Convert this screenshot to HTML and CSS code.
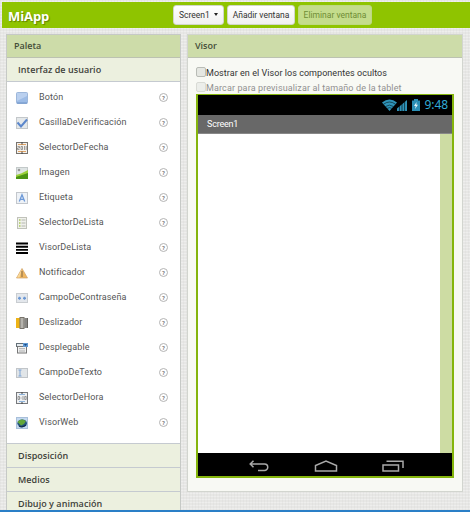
FILE: index.html
```html
<!DOCTYPE html>
<html lang="es">
<head>
<meta charset="utf-8">
<title>MiApp</title>
<link rel="stylesheet" href="styles.css">
</head>
<body>
<header class="topbar">
  <h1 class="app-name">MiApp</h1>
  <button class="btn btn-screen">Screen1 <span class="caret"></span></button>
  <button class="btn btn-add">Añadir ventana</button>
  <button class="btn btn-remove" disabled>Eliminar ventana</button>
</header>
<main class="workspace">
  <section class="panel palette">
    <h2 class="panel-title">Paleta</h2>
    <h3 class="category open">Interfaz de usuario</h3>
    <ul class="components">
      <li><svg class="icon" viewBox="0 0 12 12"><rect x=".5" y=".5" width="11" height="11" rx="1" fill="#9dbce6" stroke="#9db7da"/><path d="M1 1h10v3L1 9z" fill="#bad0ef"/><path d="M1 11h10" stroke="#6f94c8"/></svg><span>Botón</span><i class="help">?</i></li>
      <li><svg class="icon" viewBox="0 0 12 12"><rect x=".5" y=".5" width="11" height="11" fill="#e4e8ea" stroke="#c3c7ca"/><path d="M1.500 5.500l3.500 4 6-7" fill="none" stroke="#5b86cb" stroke-width="2"/></svg><span>CasillaDeVerificación</span><i class="help">?</i></li>
      <li><svg class="icon" viewBox="0 0 12 12"><rect x=".5" y=".5" width="11" height="11" fill="#f4f1ec" stroke="#77736e"/><path d="M2 2.500h8M2 9.500h8" stroke="#e3a566"/><path d="M6 0v2.500M6 9.500v2.500" stroke="#444"/><path d="M1.500 4.500h2v1.500h-2v1.500h2M5 4.500v3h1.500v-3zM8.500 4v4M10.200 4v4" fill="none" stroke="#777" stroke-width=".7"/></svg><span>SelectorDeFecha</span><i class="help">?</i></li>
      <li><svg class="icon" viewBox="0 0 12 12"><rect x=".5" y=".5" width="11" height="11" fill="#dfe5e5" stroke="#c3c9c9"/><circle cx="3" cy="3" r="1.300" fill="#999"/><path d="M0 8L5 6.500 12 3v9H0z" fill="#9bd03a"/><path d="M0 10L12 6v6H0z" fill="#4c9414"/></svg><span>Imagen</span><i class="help">?</i></li>
      <li><svg class="icon" viewBox="0 0 12 12"><rect x=".5" y=".5" width="11" height="11" fill="#eef2f7" stroke="#c3c7cc"/><path d="M3.300 9.500L6 2.700l2.700 6.800M4.300 7.300h3.400" fill="none" stroke="#6c99d8" stroke-width="1.300"/></svg><span>Etiqueta</span><i class="help">?</i></li>
      <li><svg class="icon" viewBox="0 0 12 12"><rect x="1.500" y=".5" width="9" height="11" fill="#f0f1eb" stroke="#c0c2ba"/><path d="M3 3h1.500M3 6h1.500M3 9h1.500" stroke="#a8c85c" stroke-width="1.500"/><path d="M5.500 3h4M5.500 6h4M5.500 9h4" stroke="#b4b6b0"/></svg><span>SelectorDeLista</span><i class="help">?</i></li>
      <li><svg class="icon" viewBox="0 0 12 12"><path d="M0 1.500h12M0 4.700h12M0 7.900h12M0 11h12" stroke="#000" stroke-width="1.900"/></svg><span>VisorDeLista</span><i class="help">?</i></li>
      <li><svg class="icon" viewBox="0 0 12 12"><path d="M6 1.500L11.500 11H.5z" fill="#f0b761" stroke="#cfa169" stroke-width=".7"/><path d="M6 2L3.500 10.500H1z" fill="#f9d99a"/><path d="M6 4v6" stroke="#80684b"/></svg><span>Notificador</span><i class="help">?</i></li>
      <li><svg class="icon" viewBox="0 0 12 12"><rect x=".5" y="1.500" width="11" height="9" fill="#e3e7ec" stroke="#c9cdd1"/><path d="M2 6.200h3M3.500 4.700v3M7 6.200h3M8.500 4.700v3" stroke="#6a97d4" stroke-width="1.400"/></svg><span>CampoDeContraseña</span><i class="help">?</i></li>
      <li><svg class="icon" viewBox="0 0 12 12"><rect y="1" width="4" height="10" fill="#eeb315"/><rect x="3.500" y="0" width="5" height="12" fill="#77736b"/><rect x="4.500" y="1" width="3" height="10" fill="#b5b3ad"/><rect x="8.500" y="1" width="3.500" height="10" fill="#66645e"/><path d="M10 1v10" stroke="#aaa"/></svg><span>Deslizador</span><i class="help">?</i></li>
      <li><svg class="icon" viewBox="0 0 12 12"><rect x=".5" y="1.500" width="11" height="3" fill="#e5ebef" stroke="#647078"/><rect x="1.500" y="4.500" width="9" height="6.500" fill="#f1f2f2" stroke="#777"/><path d="M3 6.700h6M3 9h6" stroke="#999" stroke-width=".8"/><rect x="7" y="1" width="5" height="4" fill="#5f97d1"/><path d="M8 2h3L9.500 4z" fill="#174a86"/></svg><span>Desplegable</span><i class="help">?</i></li>
      <li><svg class="icon" viewBox="0 0 12 12"><rect x=".5" y="1.500" width="11" height="9" fill="#e1e5e8" stroke="#c1c5c9"/><path d="M2.500 3h3M4 3v6M2.500 9h3" fill="none" stroke="#7fa5d5"/></svg><span>CampoDeTexto</span><i class="help">?</i></li>
      <li><svg class="icon" viewBox="0 0 12 12"><rect x=".5" y=".5" width="11" height="11" fill="#eef0f2" stroke="#77797c"/><path d="M3 2.500h6M3 9.500h6" stroke="#8db3db"/><path d="M6 0v2M6 10v2" stroke="#444"/><path d="M2 4.500h1.500v3H2zM4.500 6h1M7 4v4M8.700 4.500h1.500v3H8.700z" fill="none" stroke="#777" stroke-width=".7"/></svg><span>SelectorDeHora</span><i class="help">?</i></li>
      <li><svg class="icon" viewBox="0 0 12 12"><rect x=".5" y=".5" width="11" height="11" fill="#c4d9f0" stroke="#a8bfda"/><ellipse cx="6.200" cy="6.300" rx="4.800" ry="3.900" fill="#26567f"/><path d="M1.500 5q2-3 5-2.500l3.500 1.500-2 3-3 1.500z" fill="#62a738"/><path d="M3 9q3 2 7-1" stroke="#122f4e" stroke-width="1.200" fill="none"/></svg><span>VisorWeb</span><i class="help">?</i></li>
    </ul>
    <h3 class="category">Disposición</h3>
    <h3 class="category">Medios</h3>
    <h3 class="category last">Dibujo y animación</h3>
  </section>
  <section class="panel viewer">
    <h2 class="panel-title">Visor</h2>
    <div class="viewer-body">
      <label class="option"><span class="check"></span><span class="opt-hidden">Mostrar en el Visor los componentes ocultos</span></label>
      <label class="option off"><span class="check"></span><span class="opt-tablet">Marcar para previsualizar al tamaño de la tablet</span></label>
      <div class="phone">
        <div class="status">
          <svg class="wifi" viewBox="0 0 15 12"><path d="M0 3.500Q7.500-2.500 15 3.500L7.500 12z" fill="#2f93b8"/><path d="M1.500 5.200q6-4.400 12 0M3.500 7.500q4-2.800 8 0M5.200 9.400q2.300-1.500 4.600 0" fill="none" stroke="#04151b" stroke-width=".6"/></svg>
          <svg class="signal" viewBox="0 0 10 11"><path d="M0 11V8.500L10 0v11z" fill="#2f93b8"/><path d="M2.400 5v6M5 3v8M7.600 1v10" stroke="#000" stroke-width=".6"/></svg>
          <svg class="battery" viewBox="0 0 8 12"><path d="M2 0h4v1.500h2V12H0V1.500h2z" fill="#2b8fb5"/><path d="M4.600 3L2 7h1.700L3 10l3-4.200H4.300z" fill="#e4f4f8"/></svg>
          <span class="clock">9:48</span>
        </div>
        <div class="screen-title">Screen1</div>
        <div class="canvas"><div class="scroll"></div></div>
        <div class="navbar">
          <svg class="nav-back" viewBox="0 0 20 12"><path d="M4.500.7L1.200 4l3.300 3.300M1.200 4h14.300a3.200 3.200 0 0 1 0 6.500H9" fill="none" stroke="#a9a9a9" stroke-width="1.500"/></svg>
          <svg class="nav-home" viewBox="0 0 24 12"><path d="M1.500 11V5.500L12 1l10.500 4.500V11z" fill="none" stroke="#a9a9a9" stroke-width="1.500"/></svg>
          <svg class="nav-recent" viewBox="0 0 22 12"><path d="M1 5h15.500v6H1zM4.500 1.200H21V8" fill="none" stroke="#a9a9a9" stroke-width="1.500"/></svg>
        </div>
      </div>
    </div>
  </section>
</main>
<footer class="bottom-line"></footer>
</body>
</html>
```
FILE: styles.css
```css
* { box-sizing: border-box; }
body {
  margin: 0;
  width: 470px;
  height: 512px;
  overflow: hidden;
  display: flex;
  flex-direction: column;
  padding-top: 2px;
  font: 9px/12px Roboto, "Liberation Sans", sans-serif;
  color: #444;
  background:
    repeating-linear-gradient(90deg, rgba(190, 190, 190, .12) 0 1px, transparent 1px 3px),
    repeating-linear-gradient(0deg, rgba(255, 255, 255, .3) 0 1px, transparent 1px 3px),
    #e7e7e5;
}
h1, h2, h3, ul { margin: 0; padding: 0; font-weight: normal; }
.topbar {
  flex: none;
  display: flex;
  align-items: flex-start;
  height: 26px;
  margin-left: 2px;
  padding: 3px 0 0 6px;
  background: #8fc400;
}
.app-name {
  width: 165px;
  font: bold 13px/22px "Open Sans", sans-serif;
  letter-spacing: -.1px;
  color: #fff;
  text-shadow: 1px 1px 1px #5f8300;
}
.btn {
  height: 20px;
  margin: 0 3px 0 0;
  padding: 0;
  border: 1px solid #d2d6ca;
  border-radius: 3px;
  background: linear-gradient(#fff, #f0f0f0);
  font: 8.500px/17px Roboto, sans-serif;
  color: #333;
  white-space: nowrap;
}
.btn-screen { width: 51px; }
.btn-add { width: 68px; }
.btn-remove { width: 74px; border-color: #bdd883; background: #c4dc8c; color: #6f8d35; }
.caret {
  display: inline-block;
  margin: 0 0 2px 2px;
  border: 2px solid transparent;
  border-top: 3px solid #222;
  border-bottom: 0;
}
.workspace { flex: 1; min-height: 0; display: flex; align-items: flex-start; padding: 6px 0 0 6px; gap: 6px; }
.panel { border: 1px solid #c6c9c6; }
.palette { width: 175px; height: 476px; overflow: hidden; border-bottom: 0; }
.panel-title {
  height: 23px;
  padding-left: 7px;
  border-bottom: 1px solid #bcc2b1;
  background: #cddca9;
  font: 600 9px/22px "Open Sans", sans-serif;
  color: #444c38;
}
.category {
  height: 24px;
  padding-left: 11px;
  border-bottom: 1px solid #c5cad0;
  background: #ecf0df;
  font: 600 9px/24px "Open Sans", sans-serif;
  letter-spacing: .05px;
  color: #3e413a;
}
.components { list-style: none; height: 362px; padding: 3px 12px 0 9px; background: #fff; border-bottom: 1px solid #c5cad0; }
.components li { display: flex; align-items: center; height: 25px; }
.components span { flex: 1; margin-left: 11px; letter-spacing: .12px; color: #555; line-height: 23px; }
.icon { width: 12px; height: 12px; display: block; }
.help {
  width: 9px;
  height: 9px;
  border: 1px solid #b4b4b4;
  border-radius: 50%;
  font: normal 700 6px/7px Roboto, sans-serif;
  text-align: center;
  color: #777;
}
.viewer { width: 276px; height: 458px; background: #f8f9f4; border-color: #d2d5cf; }
.viewer-body { padding: 9px 8px 0; }
.option { display: flex; align-items: flex-start; height: 15px; white-space: nowrap; color: #333; line-height: 13px; }
.option.off { height: 12px; color: #909090; }
.check { width: 10px; height: 10px; border: 1px solid #b9bcb6; border-radius: 2px; background: #e5e7e2; }
.off .check { border-color: #d9dbd5; background: #eceeea; }
.opt-hidden { letter-spacing: .05px; }
.opt-tablet { letter-spacing: .12px; }
.phone { display: flex; flex-direction: column; width: 258px; height: 384px; border: 2px solid #85b50c; border-top-width: 1px; }
.status { flex: none; height: 20px; display: flex; align-items: center; justify-content: flex-end; padding-right: 4px; background: #000; }
.wifi { width: 15px; height: 12px; }
.signal { width: 10px; height: 11px; }
.battery { width: 8px; height: 12px; margin-left: 5px; }
.clock { margin-left: 5px; font: 12px/18px "Noto Sans", sans-serif; letter-spacing: -.1px; color: #31abd5; }
.screen-title { flex: none; height: 19px; padding-left: 9px; background: #686868; border-bottom: 1px solid #888; line-height: 18px; color: #fff; letter-spacing: -.2px; }
.canvas { flex: 1; display: flex; justify-content: flex-end; background: #fff; }
.scroll { width: 12px; background: #cddca3; }
.navbar { flex: none; display: flex; align-items: center; height: 23px; padding: 2px 0 0 51px; background: #000; }
.nav-back { width: 20px; height: 12px; }
.nav-home { width: 24px; height: 12px; margin-left: 45px; }
.nav-recent { width: 22px; height: 12px; margin-left: 44px; }
.bottom-line { flex: none; height: 2px; background: #2a7fc7; }
```
